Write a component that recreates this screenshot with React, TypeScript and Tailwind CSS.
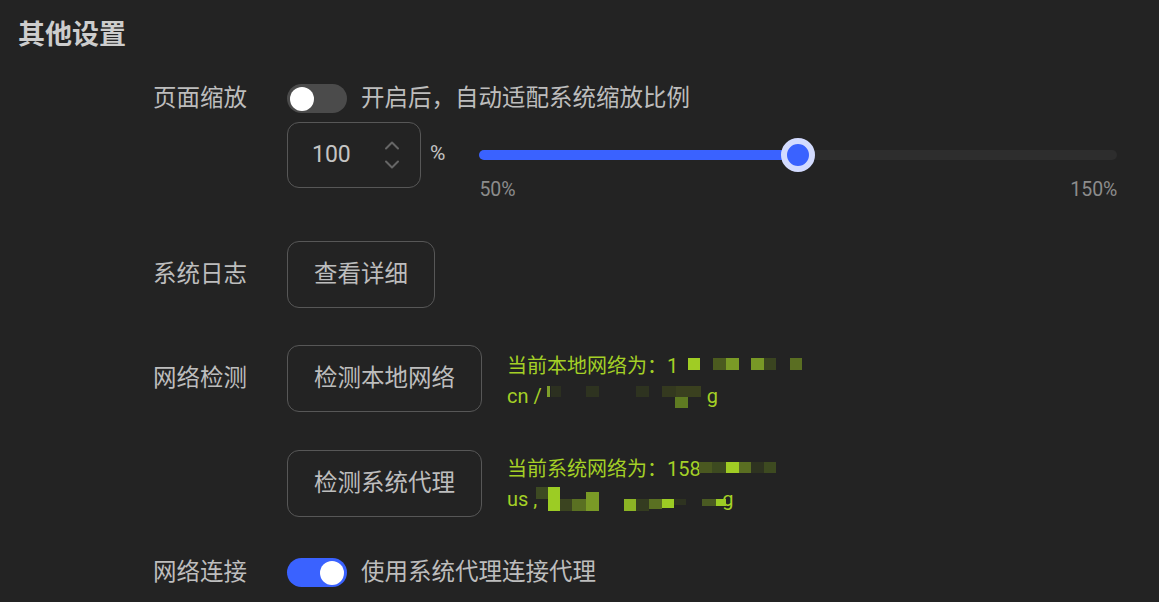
import React from 'react'

type Block = [number, number, number, number, string]

// mosaic blocks over masked network info: [left, top, width, height, colour], relative to the text box
const localBlocks: Block[] = [
  [181, 7, 12, 12, '#a0cc24'],
  [206, 7, 13, 12, '#4b5a1f'],
  [219, 7, 13, 12, '#7a9a26'],
  [244, 7, 13, 12, '#789826'],
  [257, 7, 12, 12, '#3a4420'],
  [283, 7, 12, 12, '#5a6e22'],
  [40, 35, 3, 11, '#7f9f2a'],
  [44, 35, 10, 11, '#2c3020'],
  [79, 35, 13, 11, '#2e3320'],
  [129, 35, 13, 11, '#2e3320'],
  [155, 35, 14, 11, '#34391f'],
  [169, 35, 12, 11, '#3a401f'],
  [181, 35, 13, 11, '#3a401f'],
  [168, 46, 13, 11, '#5f7b22'],
]

const systemBlocks: Block[] = [
  [192, 8, 13, 11, '#4a5820'],
  [205, 8, 14, 11, '#3d4a20'],
  [219, 8, 13, 11, '#a0cc24'],
  [232, 8, 12, 11, '#5a6e22'],
  [244, 8, 13, 11, '#2e3320'],
  [257, 8, 12, 11, '#3d4a20'],
  [29, 33, 12, 12, '#3d4a22'],
  [41, 33, 12, 24, '#9ccc24'],
  [53, 45, 12, 12, '#3b4420'],
  [65, 45, 14, 12, '#5a7022'],
  [79, 38, 13, 19, '#7a9a26'],
  [117, 45, 12, 12, '#8cb424'],
  [129, 45, 13, 12, '#343c20'],
  [142, 45, 13, 10, '#5a7022'],
  [155, 45, 12, 9, '#9ccc24'],
  [167, 45, 12, 6, '#2e3320'],
  [195, 45, 14, 7, '#4a5a22'],
  [209, 45, 10, 7, '#9ccc24'],
]

function Toggle({ on }: { on: boolean }) {
  return (
    <div
      className={`relative h-[29px] w-[60px] shrink-0 rounded-full ${on ? 'bg-[#3a62ff]' : 'bg-[#4b4b4b]'}`}
    >
      <div
        className={`absolute top-[2.5px] h-[24px] w-[24px] rounded-full bg-white ${on ? 'right-[3px]' : 'left-[3px]'}`}
      />
    </div>
  )
}

function OutlineButton({ children }: { children: React.ReactNode }) {
  return (
    <button className="h-[67px] shrink-0 rounded-[12px] border border-[#575757] px-[26px] text-[23.5px] text-[#bdbdbd]">
      {children}
    </button>
  )
}

function NetInfo({
  line1,
  line2,
  tail,
  gap,
  blocks,
}: {
  line1: string
  line2: string
  tail: string
  gap: number
  blocks: Block[]
}) {
  return (
    <div className="relative w-[300px] text-[20px] leading-[30px] text-[#a4d026]">
      <div className="whitespace-nowrap">{line1}</div>
      <div className="whitespace-nowrap">
        {line2}
        <span className="inline-block" style={{ width: gap }} />
        {tail}
      </div>
      {blocks.map(([l, t, w, h, c], i) => (
        <span
          key={i}
          className="absolute"
          style={{ left: l, top: t, width: w, height: h, backgroundColor: c }}
        />
      ))}
    </div>
  )
}

export default function App() {
  return (
    <div
      className="min-h-screen bg-[#232323] pt-[17px] text-[#bdbdbd]"
      style={{ fontFamily: 'Roboto, "Noto Sans CJK SC", sans-serif' }}
    >
      <h2 className="pl-[18px] text-[27px] font-bold leading-[36px] text-[#cdcdcd]">其他设置</h2>

      <div className="pl-[153px]">
        {/* 页面缩放 */}
        <div className="mt-[31px] flex">
          <div className="h-[29px] w-[134px] text-[23.5px] leading-[29px]">页面缩放</div>
          <div>
            <div className="flex h-[29px] items-center gap-[14px]">
              <Toggle on={false} />
              <span className="text-[23.5px]">开启后，自动适配系统缩放比例</span>
            </div>
            <div className="mt-[9px] flex items-start">
              <div className="flex h-[66px] w-[134px] items-center justify-between rounded-[12px] border border-[#575757] pl-[24px] pr-[20px]">
                <span className="text-[23px] text-[#c4c4c4]">100</span>
                <div className="flex flex-col gap-[10px]">
                  <svg width="16" height="9" viewBox="0 0 16 9" fill="none" stroke="#666" strokeWidth="2" strokeLinecap="round" strokeLinejoin="round">
                    <path d="M2 7.5 8 1.5l6 6" />
                  </svg>
                  <svg width="16" height="9" viewBox="0 0 16 9" fill="none" stroke="#666" strokeWidth="2" strokeLinecap="round" strokeLinejoin="round">
                    <path d="M2 1.5l6 6 6-6" />
                  </svg>
                </div>
              </div>
              <div className="ml-[9px] flex h-[64px] items-center text-[21px] text-[#c4c4c4]">%</div>
              <div className="ml-[34px] w-[638px] pt-[28px]">
                <div className="relative h-[10px] rounded-full bg-[#2d2d2d]">
                  <div className="h-full w-1/2 rounded-full bg-[#3a62ff]" />
                  <div className="absolute left-1/2 top-1/2 h-[34px] w-[34px] -translate-x-1/2 -translate-y-1/2 rounded-full border-[6px] border-[#d3dbff] bg-[#3a62ff]" />
                </div>
                <div className="mt-[19px] flex justify-between text-[19.5px] leading-[22px] text-[#8c8c8c]">
                  <span>50%</span>
                  <span>150%</span>
                </div>
              </div>
            </div>
          </div>
        </div>

        {/* 系统日志 */}
        <div className="mt-[40px] flex items-center">
          <div className="w-[134px] text-[23.5px]">系统日志</div>
          <OutlineButton>查看详细</OutlineButton>
        </div>

        {/* 网络检测 */}
        <div className="mt-[37px] flex items-center">
          <div className="w-[134px] text-[23.5px]">网络检测</div>
          <div className="flex items-start gap-[25px]">
            <OutlineButton>检测本地网络</OutlineButton>
            <div className="mt-[6px]">
              <NetInfo line1="当前本地网络为：1" line2="cn / " tail="g" gap={160} blocks={localBlocks} />
            </div>
          </div>
        </div>

        <div className="mt-[38px] flex">
          <div className="w-[134px]" />
          <div className="flex items-start gap-[25px]">
            <OutlineButton>检测系统代理</OutlineButton>
            <div className="mt-[4px]">
              <NetInfo line1="当前系统网络为：158" line2="us , " tail="g" gap={180} blocks={systemBlocks} />
            </div>
          </div>
        </div>

        {/* 网络连接 */}
        <div className="mt-[38px] flex items-center">
          <div className="w-[134px] text-[23.5px]">网络连接</div>
          <div className="flex items-center gap-[14px]">
            <Toggle on />
            <span className="text-[23.5px]">使用系统代理连接代理</span>
          </div>
        </div>
      </div>
    </div>
  )
}
